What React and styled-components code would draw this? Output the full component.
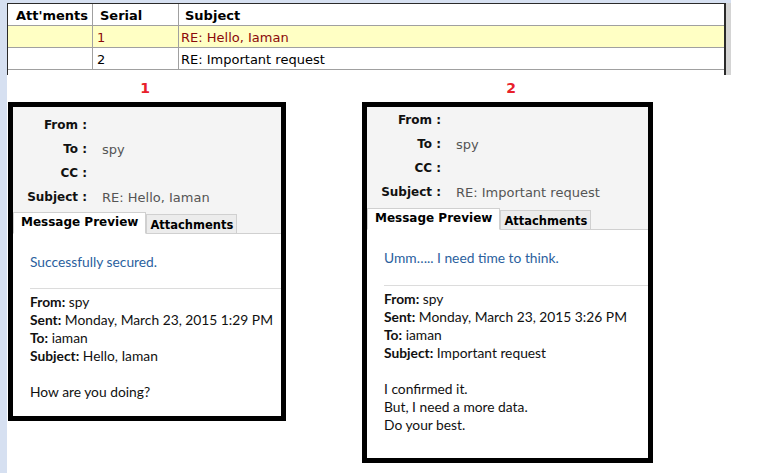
import React from "react";
import styled, { createGlobalStyle } from "styled-components";

const Global = createGlobalStyle`
  html, body { margin: 0; padding: 0; background: #ffffff; }
  body { font-family: "DejaVu Sans", Verdana, sans-serif; }
  * { box-sizing: border-box; }
`;

const Page = styled.div`
  width: 765px;
  height: 473px;
  border-left: 7px solid #d6e0f1;
  background: #ffffff;
  overflow: hidden;
`;

const TopStrip = styled.div`
  width: 724px;
  height: 3px;
  background: #d6e0f1;
`;

const TableArea = styled.div`
  display: flex;
  width: 724px;
`;

const Table = styled.div`
  width: 719px;
  height: 72px;
  border-left: 1px solid #2a2a2a;
  border-top: 1px solid #2a2a2a;
  border-right: 2px solid #2a2a2a;
`;

const Scrollbar = styled.div`
  width: 5px;
  height: 72px;
  background: #d4d4d4;
`;

const Row = styled.div`
  display: grid;
  grid-template-columns: 85px 86px 1fr;
  height: 22px;
  border-bottom: 1px solid #a0a0a0;
  background: ${(p) => (p.$selected ? "#ffffc4" : "#ffffff")};
  color: ${(p) => (p.$selected ? "#8b0a0a" : "#000000")};
`;

const Cell = styled.div`
  border-right: ${(p) => (p.$last ? "none" : "1px solid #a0a0a0")};
  padding-left: ${(p) => p.$pad}px;
  padding-top: 2px;
  font-family: "DejaVu Sans", Verdana, sans-serif;
  font-size: 13px;
  font-weight: ${(p) => (p.$head ? 700 : 400)};
  line-height: 19px;
  white-space: nowrap;
  overflow: hidden;
`;

const Columns = styled.div`
  display: flex;
  align-items: flex-start;
  gap: 76px;
  margin-left: 1px;
`;

const Column = styled.div`
  display: flex;
  flex-direction: column;
  width: ${(p) => p.$w}px;
`;

const Number = styled.div`
  height: 27px;
  padding-top: 1px;
  padding-left: ${(p) => p.$pl}px;
  padding-right: ${(p) => p.$pr}px;
  line-height: 24px;
  text-align: center;
  color: #e8212b;
  font-family: "DejaVu Sans", Verdana, sans-serif;
  font-weight: 700;
  font-size: 14px;
`;

const Panel = styled.div`
  border: 5px solid #000000;
  background: #ffffff;
`;

const Header = styled.div`
  background: #f4f4f4;
  padding-top: ${(p) => p.$top}px;
`;

const Fields = styled.div`
  display: grid;
  grid-template-columns: 74px 1fr;
  column-gap: 15px;
  grid-auto-rows: 24px;
  align-items: center;
  margin-bottom: ${(p) => p.$bottom}px;
`;

const Label = styled.div`
  text-align: right;
  font-family: "DejaVu Sans", Verdana, sans-serif;
  font-weight: 700;
  font-size: 12px;
  color: #111111;
  white-space: nowrap;
`;

const Value = styled.div`
  font-family: "DejaVu Sans", Verdana, sans-serif;
  font-size: 13px;
  color: #555555;
  white-space: nowrap;
`;

const Tabs = styled.div`
  display: flex;
  align-items: flex-end;
  border-bottom: 1px solid #d0d0d0;
`;

const Tab = styled.div`
  height: ${(p) => (p.$active ? 22 : 20)}px;
  margin-bottom: -1px;
  padding: 0 ${(p) => (p.$active ? 7 : 3)}px;
  line-height: ${(p) => (p.$active ? 19 : 20)}px;
  background: ${(p) => (p.$active ? "#ffffff" : "#ececec")};
  border: 1px solid #d0d0d0;
  border-bottom: ${(p) => (p.$active ? "1px solid #ffffff" : "1px solid #d0d0d0")};
  font-family: "DejaVu Sans", Verdana, sans-serif;
  font-weight: 700;
  font-size: ${(p) => (p.$active ? 12 : 11.5)}px;
  color: #000000;
  white-space: nowrap;
`;

const Content = styled.div`
  padding: 19px 0 ${(p) => p.$bottom}px ${(p) => p.$left}px;
  font-family: Lato, "Liberation Sans", sans-serif;
  font-size: 13.8px;
  line-height: 18px;
  color: #111111;
`;

const Reply = styled.div`
  color: #2b5f9e;
  padding-bottom: ${(p) => p.$gap}px;
  border-bottom: 1px solid #dcdcdc;
  margin-bottom: 4px;
`;

const Line = styled.div`
  min-height: 18px;
  white-space: nowrap;
`;

const B = styled.b`
  font-weight: 700;
`;

const rows = [
  { serial: "1", subject: "RE: Hello, Iaman", selected: true },
  { serial: "2", subject: "RE: Important request", selected: false },
];

const panels = [
  {
    n: "1",
    w: 278,
    pl: 0,
    pr: 4,
    top: 6,
    fieldsBottom: 3,
    subject: "RE: Hello, Iaman",
    reply: "Successfully secured.",
    gap: 17,
    sent: "Monday, March 23, 2015 1:29 PM",
    origSubject: "Hello, Iaman",
    body: ["How are you doing?"],
    bottom: 15,
  },
  {
    n: "2",
    w: 291,
    pl: 7,
    pr: 0,
    top: 1,
    fieldsBottom: 4,
    subject: "RE: Important request",
    reply: "Umm….. I need time to think.",
    gap: 18,
    sent: "Monday, March 23, 2015 3:26 PM",
    origSubject: "Important request",
    body: ["I confirmed it.", "But, I need a more data.", "Do your best."],
    bottom: 24,
  },
];

function MailPanel({ p }) {
  return (
    <Column $w={p.w}>
      <Number $pl={p.pl} $pr={p.pr}>{p.n}</Number>
      <Panel>
        <Header $top={p.top}>
          <Fields $bottom={p.fieldsBottom}>
            <Label>From :</Label>
            <Value></Value>
            <Label>To :</Label>
            <Value>spy</Value>
            <Label>CC :</Label>
            <Value></Value>
            <Label>Subject :</Label>
            <Value>{p.subject}</Value>
          </Fields>
          <Tabs>
            <Tab $active>Message Preview</Tab>
            <Tab>Attachments</Tab>
          </Tabs>
        </Header>
        <Content $left={17} $bottom={p.bottom}>
          <Reply $gap={p.gap}>{p.reply}</Reply>
          <Line>
            <B>From:</B> spy
          </Line>
          <Line>
            <B>Sent:</B> {p.sent}
          </Line>
          <Line>
            <B>To:</B> iaman
          </Line>
          <Line>
            <B>Subject:</B> {p.origSubject}
          </Line>
          <Line />
          {p.body.map((t) => (
            <Line key={t}>{t}</Line>
          ))}
        </Content>
      </Panel>
    </Column>
  );
}

export default function App() {
  return (
    <Page>
      <Global />
      <TopStrip />
      <TableArea>
        <Table>
          <Row>
            <Cell $head $pad={8}>Att'ments</Cell>
            <Cell $head $pad={7}>Serial</Cell>
            <Cell $head $pad={6} $last>Subject</Cell>
          </Row>
          {rows.map((r) => (
            <Row key={r.serial} $selected={r.selected}>
              <Cell $pad={4}></Cell>
              <Cell $pad={4}>{r.serial}</Cell>
              <Cell $pad={2} $last>{r.subject}</Cell>
            </Row>
          ))}
        </Table>
        <Scrollbar />
      </TableArea>
      <Columns>
        {panels.map((p) => (
          <MailPanel key={p.n} p={p} />
        ))}
      </Columns>
    </Page>
  );
}
